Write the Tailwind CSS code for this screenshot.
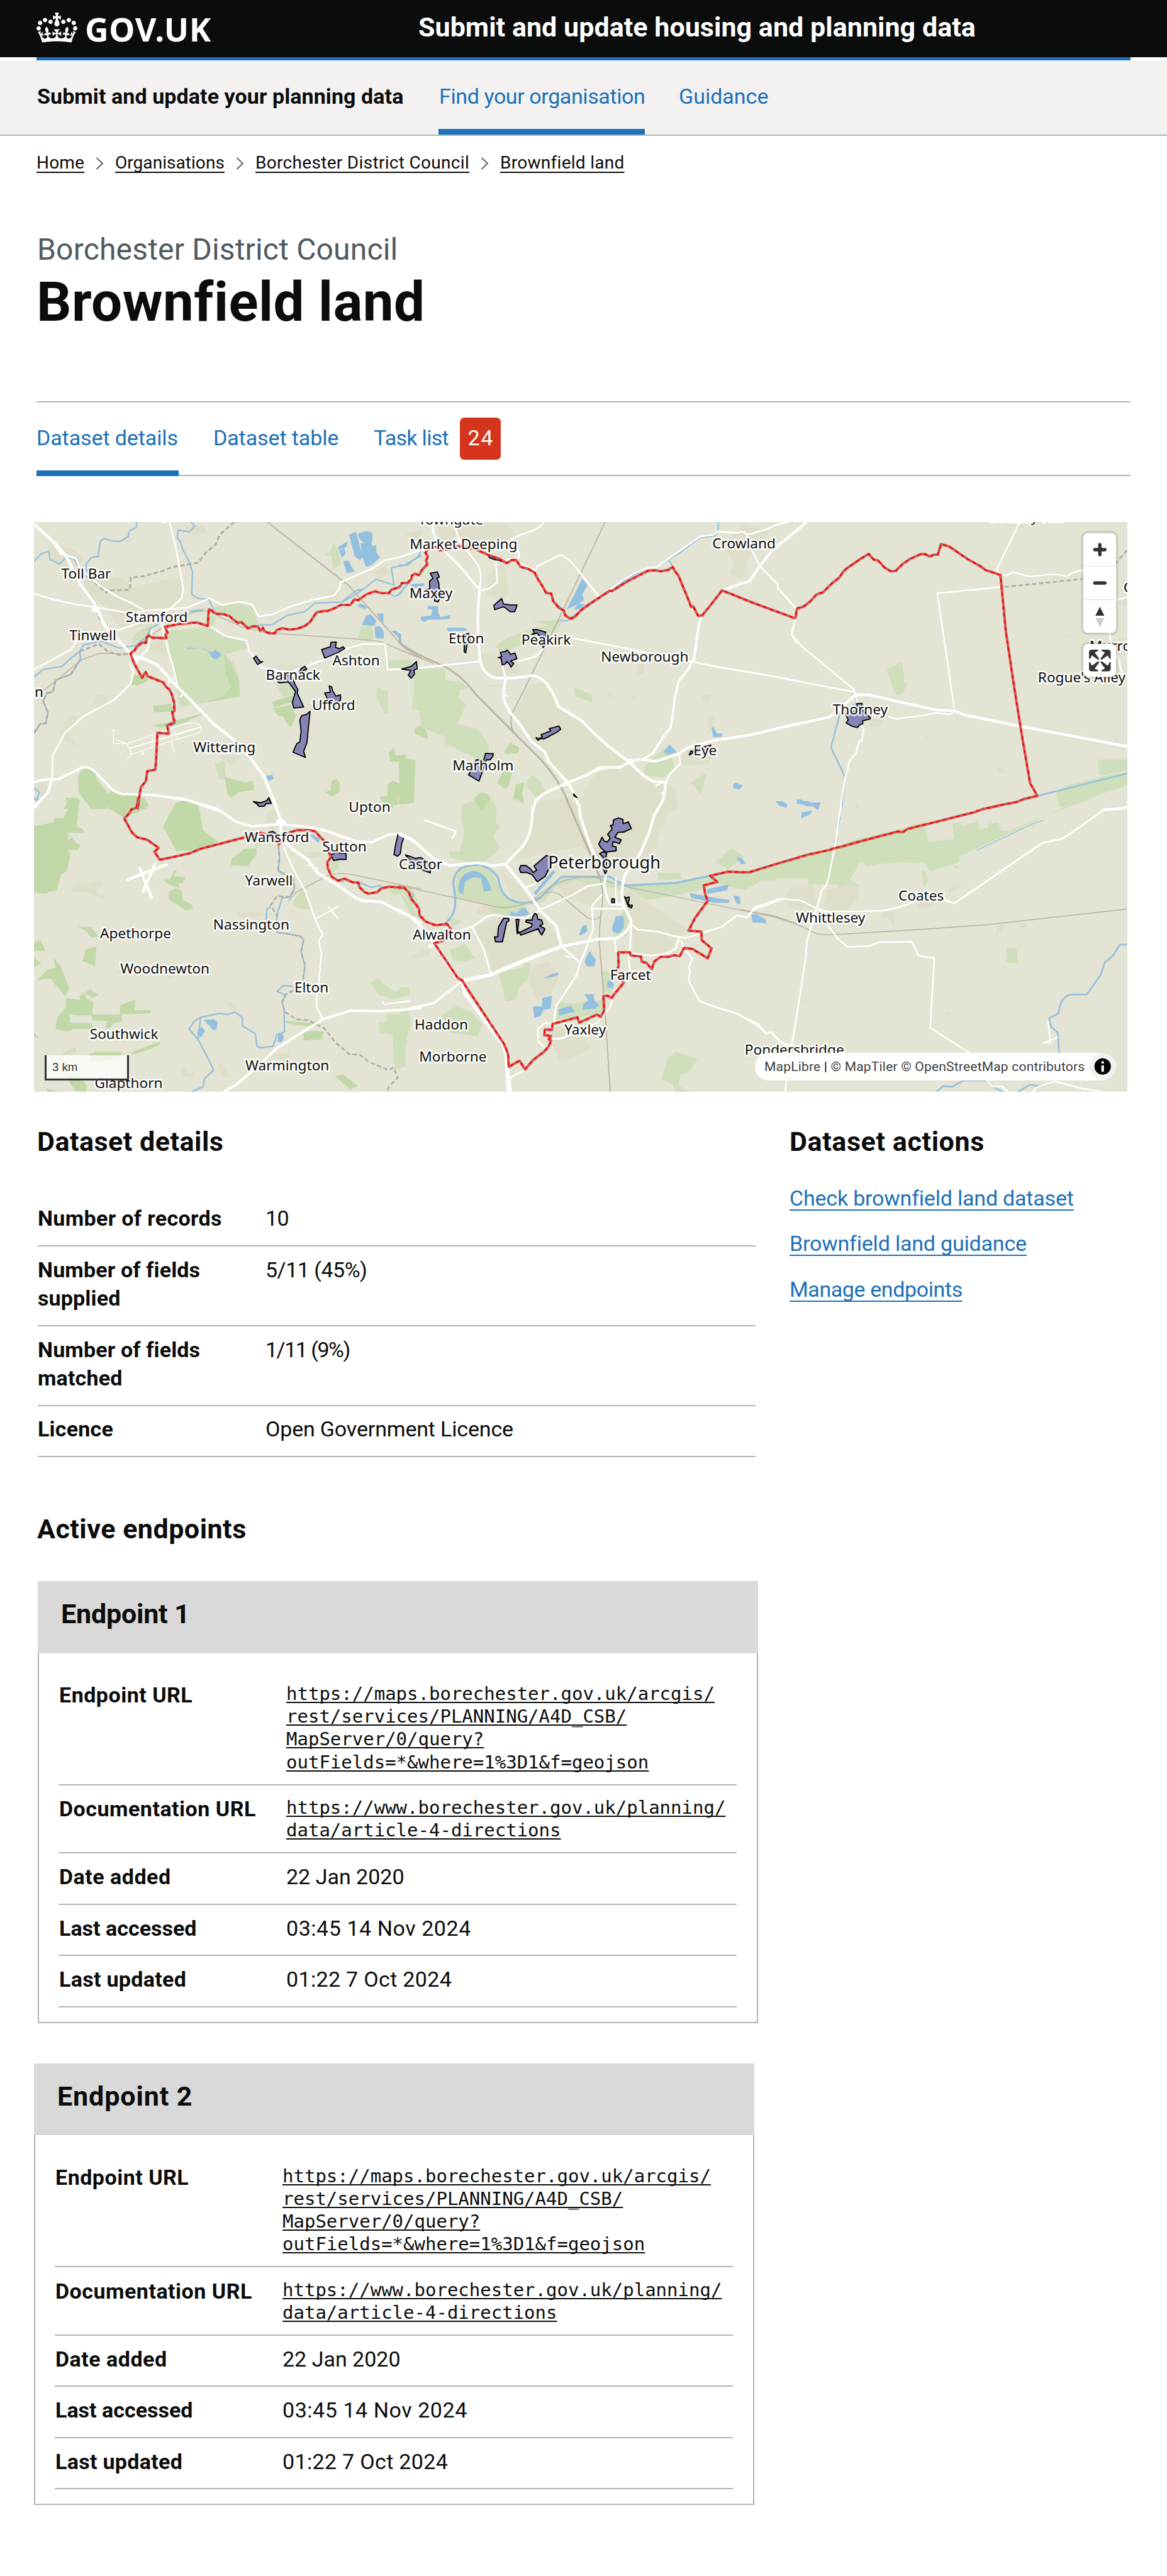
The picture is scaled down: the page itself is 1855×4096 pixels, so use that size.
<!DOCTYPE html>
<html lang="en">
<head>
<meta charset="utf-8">
<title>Brownfield land - Submit and update housing and planning data</title>
<script src="https://cdn.jsdelivr.net/npm/@tailwindcss/browser@4"></script>
</head>
<body class="min-h-[4096px] w-[1855px] overflow-x-hidden bg-white font-['Roboto',sans-serif] text-[34px] text-[#0b0c0c]">

<header class="flex h-[91px] items-start bg-[#0b0c0c] px-[58px] text-white">
  <a class="flex w-[607px] items-start">
    <svg class="mt-5 h-[48px] w-[65px]" viewBox="0 0 132 97" fill="currentColor"><path d="M25 30.2c3.5 1.5 7.7-.2 9.1-3.7 1.5-3.6-.2-7.8-3.9-9.2-3.6-1.4-7.6.3-9.1 3.9-1.4 3.5.3 7.5 3.9 9zM9 39.5c3.6 1.5 7.8-.2 9.2-3.7 1.5-3.6-.2-7.8-3.9-9.1-3.6-1.5-7.6.2-9.1 3.8-1.4 3.5.3 7.5 3.8 9zM4.4 57.2c3.5 1.5 7.7-.2 9.1-3.8 1.5-3.6-.2-7.7-3.9-9.1-3.5-1.5-7.6.3-9.1 3.8-1.4 3.5.3 7.6 3.9 9.1zm38.3-21.4c3.5 1.5 7.7-.2 9.1-3.8 1.5-3.6-.2-7.7-3.9-9.1-3.6-1.5-7.6.3-9.1 3.8-1.3 3.6.4 7.7 3.9 9.1zm64.4-5.6c-3.6 1.5-7.8-.2-9.1-3.7-1.5-3.6.2-7.8 3.8-9.2 3.6-1.4 7.7.3 9.2 3.9 1.3 3.5-.4 7.5-3.9 9zm15.9 9.3c-3.6 1.5-7.7-.2-9.1-3.7-1.5-3.6.2-7.8 3.7-9.1 3.6-1.5 7.7.2 9.2 3.8 1.5 3.5-.3 7.5-3.8 9zm4.7 17.7c-3.6 1.5-7.8-.2-9.2-3.8-1.5-3.6.2-7.7 3.9-9.1 3.6-1.5 7.7.3 9.2 3.8 1.3 3.5-.4 7.6-3.9 9.1zM89.3 35.8c-3.6 1.5-7.8-.2-9.2-3.8-1.4-3.6.2-7.7 3.9-9.1 3.6-1.5 7.7.3 9.2 3.8 1.4 3.6-.3 7.7-3.9 9.1zM69.7 17.7l8.9 4.7V9.3l-8.9 2.8c-.2-.3-.5-.6-.9-.9L72.4 0H59.6l3.5 11.2c-.3.3-.6.5-.9.9l-8.8-2.8v13.1l8.8-4.7c.3.3.6.7.9.9l-5 15.4v.1c-.2.8-.4 1.6-.4 2.4 0 4.1 3.1 7.5 7 8.1h.2c.3 0 .7.1 1 .1.4 0 .7 0 1-.1h.2c4-.6 7.1-4.1 7.1-8.1 0-.8-.1-1.7-.4-2.4V34l-5.1-15.4c.4-.2.7-.6 1-.9zM66 92.8c16.9 0 32.8 1.1 47.1 3.2 4-16.9 8.9-26.7 14-33.5l-9.6-3.4c1 4.9 1.1 7.2 0 10.2-1.5-1.4-3-4.3-4.2-8.7L108.6 76c2.8-2 5-3.2 7.5-3.3-4.4 9.4-10 11.9-13.6 11.2-4.3-.8-6.3-4.6-5.6-7.9 1-4.7 5.7-5.9 8-.5 4.3-8.7-3-11.4-7.6-8.8 7.1-7.2 7.9-13.5 2.1-21.1-8 6.1-8.1 12.3-4.5 20.8-4.7-5.4-12.1-2.5-9.5 6.2 3.4-5.2 7.9-2 7.2 3.1-.6 4.3-6.4 7.8-13.5 7.2-10.3-.9-10.9-8-11.2-13.8 2.5-.5 7.1 1.8 11 7.3L80.2 60c-4.1 4.4-8 5.3-12.3 5.4 1.4-4.4 8-11.6 8-11.6H55.5s6.4 7.2 7.9 11.6c-4.2-.1-8-1-12.3-5.4l1.4 16.4c3.9-5.5 8.5-7.7 10.9-7.3-.3 5.8-.9 12.8-11.1 13.8-7.2.6-12.9-2.9-13.5-7.2-.7-5 3.8-8.3 7.1-3.1 2.7-8.7-4.6-11.6-9.4-6.2 3.7-8.5 3.6-14.7-4.6-20.8-5.8 7.6-5 13.9 2.2 21.1-4.7-2.6-11.9.1-7.7 8.8 2.3-5.5 7.1-4.2 8.1.5.7 3.3-1.3 7.1-5.7 7.9-3.5.7-9-1.8-13.5-11.2 2.5.1 4.7 1.3 7.5 3.3l-4.7-15.4c-1.2 4.4-2.7 7.2-4.3 8.7-1.1-3-.9-5.3 0-10.2l-9.5 3.4c5 6.9 9.9 16.7 14 33.5 14.8-2.1 30.8-3.2 47.7-3.2z"/></svg>
    <span class="ml-[12px] font-['Noto_Sans',sans-serif] text-[52px] leading-[91px] font-bold tracking-[0.7px]">GOV.UK</span>
  </a>
  <span class="text-[43px] leading-[86px] font-bold whitespace-nowrap tracking-[0.04px]">Submit and update housing and planning data</span>
</header>
<div class="mx-[58px] h-[5px] bg-[#1d70b8]"></div>

<nav class="flex h-[120px] border-b-2 border-[#b1b4b6] bg-[#f3f2f1] px-[58px] leading-[114px] whitespace-nowrap">
  <span class="w-[639px] pl-px font-bold tracking-[0.08px]">Submit and update your planning data</span>
  <a class="h-[118px] w-[328px] border-b-[9px] border-[#1d70b8] pl-px tracking-[-0.4px] text-[#1d70b8]">Find your organisation</a>
  <a class="ml-[54px] text-[#1d70b8]">Guidance</a>
</nav>

<ol class="flex h-[58px] items-start px-[58px] pt-7 text-[28px] leading-[30px] whitespace-nowrap underline decoration-[2px] underline-offset-[5px] [text-decoration-skip-ink:none]">
  <li class="w-[76px] tracking-[0.2px]">Home</li>
  <li class="mx-[18px] pt-[6px]"><svg class="h-[20px] w-[13px]" viewBox="0 0 13 20" fill="none" stroke="#505a5f" stroke-width="1.8"><path d="M1.5 1L11 10L1.5 19"/></svg></li>
  <li class="w-[174px] tracking-[0.05px]">Organisations</li>
  <li class="mx-[18px] pt-[6px]"><svg class="h-[20px] w-[13px]" viewBox="0 0 13 20" fill="none" stroke="#505a5f" stroke-width="1.8"><path d="M1.5 1L11 10L1.5 19"/></svg></li>
  <li class="w-[340px] tracking-[0.31px]">Borchester District Council</li>
  <li class="mx-[18px] pt-[6px]"><svg class="h-[20px] w-[13px]" viewBox="0 0 13 20" fill="none" stroke="#505a5f" stroke-width="1.8"><path d="M1.5 1L11 10L1.5 19"/></svg></li>
  <li class="tracking-[0.28px]">Brownfield land</li>
</ol>

<main>
  <div class="px-[58px]">
    <p class="mt-[92.7px] pl-[1px] text-[48px] leading-[60px] tracking-[0.18px] text-[#505a5f]">Borchester District Council</p>
    <h1 class="mt-[3px] text-[87px] leading-[100px] font-bold tracking-[0.5px]">Brownfield land</h1>
    <div class="mt-[108px] flex h-[119px] border-y-2 border-[#b1b4b6] leading-[112px] whitespace-nowrap text-[#1d70b8]">
      <a class="h-[117px] w-[226px] border-b-[9px] border-[#1d70b8] tracking-[-0.1px]">Dataset details</a>
      <a class="ml-[55px] w-[199px] tracking-[-0.1px]">Dataset table</a>
      <a class="ml-[56px] tracking-[-0.7px]">Task list</a>
      <span class="mt-[24px] ml-[18px] h-[67px] w-[65px] rounded-[7px] bg-[#d4351c] pl-[2px] text-center leading-[64px] tracking-[1.8px] text-white">24</span>
    </div>
  </div>

  <div class="relative mt-[73px] ml-[54px] h-[906px] w-[1738px] overflow-hidden">
    <svg class="block h-[906px] w-[1738px] bg-[#e3e4d3] [&_path]:[vector-effect:non-scaling-stroke]" viewBox="60 916 1919 1000" preserveAspectRatio="none" fill="none" stroke-linejoin="round">
      <!-- north west -->
      <g transform="translate(40 900) scale(.44643 .33333)">
        <g fill="#dfdeca">
          <path d="M330 330L400 345L430 395L620 335L630 440L600 490L560 500L640 560L480 600L380 600L330 500L250 420L240 350Z"/>
          <path d="M100 180l30-20 80 40 30 40-30 60-90-40zM200 1065l15 0-5 50-25 10-10 50-25-10 10-45zM290 960l40 0 10 60-40 20-20-40zM140 1140l40 20 30 70-60-40zM640 70l80 0 0 30-40 20-40-20zM400 140l35-10-20 30zM500 690l60-30 20 100-70-20zM770 1280l100 0-50 50zM1010 800l90 0 20 60-100 60-30-80zM1380 310l50-30 10 40-40 30zM1200 420l50-20-10 50-30 10zM1500 110l70-20 0 60zM50 1420l50 10-10 60-40 10z"/>
        </g>
        <g fill="#cfdebb">
          <path d="M565 620L650 612L730 600L790 650L870 670L890 710L795 745L835 800L855 885L845 950L790 985L620 1020L600 900L590 800Z"/>
          <path d="M760 495L840 475L905 495L930 590L890 600L850 580L800 540L740 530ZM720 545h40l-10 60h-25ZM1190 220l20-20 15-40 20 50 5 60-30 25-5-70zM1330 600l40-10 10 50-10 40-50-20zM1435 780l90-10 10 40-60 20-40-10zM1395 920l40 20v115l-15-5-30-90zM755 1320l40-10 0 60 10 30-30 5zM1000 910l60-20 20 60-60 20zM440 640l70-60-10 60-70 50z"/>
        </g>
        <g fill="#c1d8a8">
          <path d="M440 850L490 860L492 885L450 910L428 905ZM515 1015l70-10 10 40-80 5zM505 1120l60-15 60-20 100-35-100 60-80 20zM980 995l80-35 20 25-90 40zM985 1030l70-20 20 60-20 60-20-30-10-30-20 0zM735 990l55-25 30-50-20-60-5-110 35 80 20 60 5 80-120 30z"/>
          <path d="M218 1400Q225 1340 262 1345Q290 1360 290 1400L335 1475L330 1560H270L220 1470ZM335 1480L350 1460L450 1490L490 1560H335ZM160 1560L180 1515L220 1518L222 1560ZM600 1560L630 1510L690 1530V1560ZM795 1390l80 30 30-10 5 50-60 10-30 30-15-20zM1190 1470l20-10 5-50 20-10 12 20 0 50-30 25zM1440 1260l20-25 5 40 80 30-5 140-25 60-40-10-20 60-40-20-10-40 30-5v-60l20-20 30 20 10-120-50 0z"/>
        </g>
        <path fill="#93c0e0" d="M1283 115l28-15 10 50 15 80-10 20-20-20zM1317 110l35-15 23 10v45l-30 10-20-20zM1328 160l45-10 0 25 18-5 0 40 15 25-35 40-20 10-15-50zM1240 180l38-30-5 30-30 15zM1245 200l20-15 5 30-15 20zM1260 255l20-5 25 60-30 8zM648 710l30 0 40 8 20 15 15-5 0-12 30 30-20 25-15-5-20-40-35-15-45 5zM655 515l60-10-10 15-50 3zM1315 490l15-15 25 20-10 12zM1350 540l20-5 20 30-5 30-50-5zM1392 530l27 0 0 50-15-20zM1385 600l20-5 15 30v35h-33zM1448 620l20 0 15 25 5 35-15-30zM560 1115l45-20-5 20-20 10zM957 1385l25-5 5 20-20 12z"/>
        <g stroke="#93c0e0" stroke-width="2.2">
          <path d="M448 48V75L420 95L415 125L385 150L355 148L320 135L305 150L297 230L270 235L250 270L253 340"/>
          <path d="M662 48L678 72L655 100L612 90L608 130L620 150L630 195L655 255L668 310L665 430L690 450L732 455L742 485L752 508"/>
          <path d="M45 255L75 215L103 203L108 245L145 270L170 235L200 240L225 290"/>
          <path d="M45 865L80 825L155 808L195 760L225 730L240 695L310 675L380 712L440 700L490 650L500 610L540 580"/>
          <path d="M932 590L980 590L1040 540L1110 520L1150 475L1255 470L1310 430L1390 350L1460 380L1450 290L1500 275L1568 225M1255 470L1310 410L1340 400M1440 425L1465 440L1490 420L1500 390"/>
          <path d="M225 730L228 770L190 850L130 880L120 940L95 950L80 990L100 1050L90 1110L70 1110L45 1160M45 1450L65 1470L55 1515L45 1500"/>
        </g>
        <g stroke="#acaca6" stroke-width="2.8" stroke-dasharray="7 4">
          <path d="M833 48L775 115L760 165L720 210L690 262L590 285L545 308L470 335L425 340L422 405L335 408L330 420L250 330"/>
          <path d="M220 360L290 480L300 550L350 640L420 740M225 730L300 690L335 730L385 750L420 740M228 770L190 850L130 880L120 940L95 950L80 990L100 1050L90 1110L70 1110L45 1160"/>
        </g>
        <g stroke="#b9afa4" stroke-width="1.8">
          <path d="M962 48L1280 380L1340 470L1500 710L1568 765"/>
          <path stroke-width="1.3" d="M75 945L230 775L300 740L420 742L500 650Q560 590 640 540T770 545L870 605L1000 635L1320 665L1400 675L1568 765"/>
        </g>
        <g stroke="#fff" stroke-width="2.6">
          <path stroke-width="4.4" d="M45 60L120 150L165 215L200 300L225 370L290 490L320 590L430 750L470 765L530 800L590 890L700 1040L750 1110L830 1195L890 1280L950 1390L1000 1560"/>
          <path d="M125 165L150 215L210 240L225 290L300 380L370 440L430 475L480 515L600 505L650 498L735 450L785 485L850 468L900 480L928 545L980 535L1060 490L1140 458L1225 435L1245 400L1250 365L1380 290L1420 250L1490 232L1568 190"/>
          <path d="M578 48L605 200L632 400L625 450L580 505L545 530L550 600L575 740L590 800L610 920M45 425L120 455L200 480L280 495L430 530L480 515M370 620L500 560L550 545M45 825L190 720L220 660M735 595L800 650L880 672L890 725L920 775L940 815L1050 840L1180 775L1260 720L1340 690L1425 690L1435 825L1568 820M420 790L435 830L425 900L360 985L240 1070L165 1160L118 1280L116 1400M510 620L490 720L440 790"/>
          <path stroke-width="3.6" d="M45 1420Q65 1400 140 1403L235 1340Q260 1330 290 1370L360 1465L390 1480L510 1485L630 1505L770 1560M116 1403L100 1470L45 1555"/>
          <path fill="#fff" d="M430 760l40-5-25 35zM275 495l20 0-5 25-15-5z"/><path d="M575 900Q570 875 600 870M635 945l-15 25"/>
          <path stroke-width="1.3" d="M360 1190L410 1215L500 1175L640 1110Q700 1095 705 1140L690 1160L585 1200L430 1270L410 1215M350 1145l15 0M357 1145v70l50 0M585 1200l12 62M412 1303l15-35M465 1270l15 0M473 1250v20M510 1180v50M595 1145l10 40"/>
          <path stroke-width="2.2" d="M420 1240L700 1128"/>
        </g>
        <g fill="#8585b5" stroke="#000" stroke-width="1.8">
          <path d="M1176 720L1210 705L1212 682L1233 680L1230 708L1245 715L1260 705L1266 714L1240 735L1188 765ZM908 765l10-10 8 15 10 15 8-2-20 15zM1095 820l15-12 7 16-30 15zM1003 890L1045 850L1065 880L1070 900L1082 930L1080 950L1105 1022L1067 1028L1060 1000L1073 940L1045 890L1010 895ZM1205 912L1215 915L1220 940L1232 965L1250 958L1250 985L1230 1010L1205 1000L1188 948L1210 945ZM1130 1045L1118 1210L1105 1255L1112 1288L1063 1260L1078 1215L1090 1205L1095 1150L1090 1090L1097 1068L1115 1062ZM908 1520L935 1527L960 1515L968 1500L977 1528L958 1530L950 1543L930 1545L920 1530Z"/>
        </g>
      </g>
      <!-- north -->
      <g transform="translate(700 900) scale(.44643 .33333)">
        <g fill="#dfdeca">
          <path d="M150 60L310 48L400 60L380 100L420 130L400 190L300 170L240 150L170 150ZM355 320l60-60 20 160-20 40-70-30zM350 60l80 0 30 50-40 40-50-20z"/>
          <path d="M450 1060L520 900L560 890Q600 920 625 1010L720 1100L780 1180L900 1310L860 1340L780 1345L665 1420L580 1280L520 1200L460 1100ZM320 740l60 0 40 60-10 60-40 10-40-60zM430 790l50 10-10 50-45-10z"/>
          <path d="M735 1440L780 1370L830 1350L910 1330L1000 1410L1055 1430L1100 1460L1080 1560H710ZM1300 130l60-70 100 40-30 60-50 60-30 130-50-30 20-60-30-60zM940 800l25-10v60l-30 5zM1090 1280l100-60 50 40-20 60-100 10zM1215 1065l30 0-5 70-25 30zM1195 960l40-5-10 35-30 0zM820 945l20 0v25h-20zM920 960h12v20h-12zM350 910l55-10-15 20-40 0z"/>
        </g>
        <g fill="#cfdebb">
          <path d="M60 820L180 820L185 880L240 890L275 920L240 935L235 975L262 1005L250 1060L230 1110L310 1140L355 1225V1280L320 1300L180 1215L185 1180L90 1130L80 1040L52 1035L60 940Z"/>
          <path d="M527 572L650 562L610 640L430 720L425 780L380 700L430 655L540 608L590 590ZM690 920L760 955L758 995L695 965ZM965 1340L1040 1240L1070 1260L1085 1340L1040 1395L965 1380ZM1150 1420l60-50-10 60-15 50zM0 780l40 0 0 40-40-10zM260 1560l60-70 60 30-20 40zM520 1380l30 20 30 70-40 30-40-70z"/>
        </g>
        <path fill="#c1d8a8" d="M0 1275L25 1272L30 1300L65 1300L60 1525L5 1535ZM415 1260l25-50 35 25-5 30-50 5zM395 1400l20-50 30 20-10 60-15 25-30-30zM460 1430l35-10-10 60 5 30-40 0zM60 1140l25-20 25 30 5 40-50-25zM300 1500l25-30 30 15 5 35-40 20-20-10z"/>
        <path fill="#93c0e0" d="M660 510L722 345L743 382L722 430L728 460L690 490ZM690 505l15-30 20 10 0 15-30 10zM115 490h40l0 35 10 25 38-12v20l-40 5-50 0-10 12-15-10v-18l40-8 5-30-20-5zM188 605h78v15l-70 4zM50 375l50-5 0 15-55 15zM0 630l10 10v45l-10 0zM1040 1260l25-40 28 38-30 15zM1230 1130l10 0 10 30 26 5-10 15-30 0zM1315 1430l10-10 27 15-10 20-25-5zM1482 1518l25 0 20 20-5 15-25-15z"/>
        <g stroke="#93c0e0" stroke-width="2.2">
          <path d="M1257 48V85L1245 120L1185 130L1100 215L1015 285L975 292L900 345L840 405L700 530L660 570L633 562M605 460L650 515M1063 250L1080 290M0 275L35 275L80 225L90 190M0 430L45 360M710 480l22 5"/>
        </g>
        <g stroke="#b9afa4">
          <path stroke-width="1.6" d="M812 48L640 530L520 860L450 1045Q430 1110 455 1165"/>
          <path stroke-width="2.6" d="M0 680Q60 740 150 790T300 950L440 1140L560 1300Q640 1420 678 1560"/>
          <path stroke-width="1.4" d="M0 718L140 795M443 1080Q438 1120 455 1160"/>
        </g>
        <g stroke="#fff" stroke-width="2.6">
          <path d="M0 235L75 200L150 190L240 150M240 150L215 48M240 150L310 270Q330 310 318 405M382 250L388 365L355 400L318 410M572 48Q550 90 500 105L440 140L470 200L475 235L425 248M475 265L540 305L545 280L640 220L680 260L790 445"/>
          <path stroke-width="3.6" d="M133 48Q130 130 180 200L240 280L318 405"/>
          <path stroke-width="4" d="M318 410Q305 560 318 740Q320 850 385 870L450 870L530 857Q590 870 628 1020L720 1095L775 1170L830 1235L905 1310L960 1380L1000 1415L1050 1420L1045 1480L1020 1560M420 870L412 970Q420 1030 470 1100L520 1200L575 1260L590 1310L665 1420L700 1500L708 1560M525 1560Q530 1500 600 1460L665 1420L740 1380L790 1340L870 1340L905 1312L950 1295"/>
          <path fill="#fff" stroke="none" d="M895 1300l25-10 0 40-15-5zM650 1410l25 0 0 25-20 5zM620 1010l15 10-5 10zM745 1375l45-38 30 5-50 25z"/>
          <path d="M5 825L140 808L318 782M407 800L420 870M465 780L490 775L540 755L580 700M680 658L900 715L1140 780L1270 815L1430 850L1568 885"/>
          <path stroke-width="3.4" d="M1155 780L1140 820L1100 890L1085 980L1070 1130L1040 1180L1000 1265L955 1300"/>
          <path d="M790 445L880 355L940 310L980 290L1015 285L1100 205L1185 125L1240 115L1250 98L1335 105Q1350 90 1370 115L1450 85L1480 65L1530 48M1370 120L1390 200L1420 280L1490 375L1490 395L1568 510M1560 560L1545 640L1568 685"/>
          <path stroke-width="4" d="M1568 90L1470 195L1415 290L1380 360L1340 375L1275 408L1190 545L1180 590L1160 780"/>
          <path stroke-width="4" d="M955 1298L1010 1308L1100 1270L1130 1240L1230 1200L1380 1170L1568 1110"/>
          <path d="M1103 1270L1107 1320L1070 1370L1050 1420M1050 1475l-20 0M1010 1438l20-15M430 962l-15 5M410 930v15"/>
        </g>
        <g fill="#8585b5" stroke="#000" stroke-width="1.8">
          <path d="M124 318L152 311L160 338L150 345L157 365L160 400L172 420L155 468L142 465L140 430L105 405L122 400L122 360L135 345ZM352 222l15 12 8-4 10 10 8-4 14 20-15-8-10 0-25-12zM374 487L405 451L412 480L440 485L465 485L463 498L456 520L438 520L420 500L410 495L378 510ZM255 640l20-5 8 40-15 20-4 42-6-5 0-30zM524 640L535 632L527 615L545 615L578 628L580 690L568 710L560 660L545 632ZM392 762L405 757L400 735L420 730L427 722L435 735L440 745L457 738L465 768L440 780L453 793L442 812L435 795L425 782L420 795L407 800L403 765ZM12 822L50 808L70 783L73 820L60 828L62 850L50 870L38 855L48 830ZM540 1183L550 1190L565 1180L560 1168L598 1148L592 1135L610 1130L630 1122L637 1140L622 1155L600 1170L580 1185L570 1190L555 1188L548 1198ZM342 1266L360 1268L372 1268L370 1282L360 1300L345 1300L330 1360L316 1412L275 1380L305 1300L335 1300ZM688 1480l25 36-5 2-20-32zM1143 1275l5-20 15 0 20-18 45-14-10 20-55 15z"/>
        </g>
      </g>
      <!-- north east -->
      <g transform="translate(1380 900) scale(.42602 .33333)">
        <path fill="#dfdeca" d="M920 60l50 10 20-15-20 30-40-10zM1100 330l30 0-10 20-20-5zM1370 460l35-20v50l-30 0zM1340 670l66-20v20zM1155 640l15 5 5 10-10 5zM345 1090l50-10 10 10-20 30-35 10zM575 1180l15 0v10h-15zM895 1165h10v25h-10zM1355 1185h12v30h-12zM775 1210h12v10h-12zM865 1335l40 20-20 20zM285 1530h15v25h-15z"/>
        <path fill="#cfdebb" d="M415 822L478 787L487 895L500 900L483 940L470 960L448 952ZM1285 1300H1406V1355L1290 1385ZM1143 1440L1320 1385L1406 1365V1435L1130 1550L1112 1480Z"/>
        <path fill="#93c0e0" d="M45 1510l20 0 20 15 35 0 22 0-8 35-20-15-30 0-20-15-20 0z"/>
        <path stroke="#93c0e0" stroke-width="2.4" d="M280 950L292 1000L220 1065L185 1235L243 1390L228 1560M1036 1490L1406 1372"/>
        <path stroke="#b0b0aa" stroke-width="2.8" stroke-dasharray="7 4" d="M900 390L1223 348M1355 270L1406 195"/>
        <g stroke="#fff" stroke-width="2.4">
          <path d="M962 48L905 200L867 300L883 325L905 330L935 312L985 330L1010 335L1100 323L1160 333L1175 318L1215 300L1225 310M885 390L623 423L693 1030M0 445L45 510M38 560L23 640L70 710L100 740L280 930L285 955M1360 460L1406 443M1333 630L1338 700L1370 770L1385 850"/>
          <path stroke-width="4" d="M0 140L85 48M0 1125L180 1075L245 1005L285 958"/>
          <path stroke-width="4.2" d="M285 958L340 958L450 990L620 1038L695 1043L740 1065L960 1122L1406 1230"/>
          <path d="M0 875L280 943M420 1070L450 1085L570 1065L620 1053L675 1062L693 1045M285 958L295 1010M310 1120L320 1140L312 1200L300 1205L288 1265L262 1305L243 1400L226 1530L226 1560M1300 1560L1406 1552"/>
        </g>
        <path fill="#8585b5" stroke="#000" stroke-width="1.8" d="M292 1004L314 1004L310 1030L330 1060L347 1077L346 1085L316 1095L316 1110L305 1115L293 1130L270 1122L247 1106L256 1090L245 1058L292 1040Z"/>
      </g>
      <!-- south west -->
      <g transform="translate(40 1400) scale(.44643 .33801)">
        <path fill="#dfdeca" d="M190 470L220 440L260 445L300 430L312 460L290 490L325 515L320 530L290 515L250 490L195 490ZM840 600l100-10 10 20-90 20zM790 1055l40 10 20 40-40-20zM780 1360l20 60 12 20-15 20-30-60zM625 1420l15-20 10 30 25-5-10 30-30-10zM990 1330l60-10-10 50-50-20zM960 80l30-30 20 60-30 60-20-20zM1100 290l60-10 30 20-80 20zM360 910l40-20-10 20zM560 930l40-5-20 15z"/>
        <g fill="#c1d8a8">
          <path d="M45 145L120 130L125 105L160 105L200 10H225L212 150L235 160L242 180L180 180L175 270L188 290L175 380L150 400L135 480L100 490L95 500L45 490Z"/>
          <path d="M165 235l30-30 15 30 18 10-10 25-55 0zM170 0h50l-5 35-45-20zM330 0h150l15 40-40 35-35 15-20 15-68-60zM600 30L635 10L692 35L710 170L770 230L700 265L662 275H603L552 148ZM820 320l30-30 20-25 50-2 0 30-35 62-65-5zM553 425l25 0 20-45 10 0-15 25 50 10-15 30-15 0 5 25-40-20-20-15zM575 490l25-20 25 10 5 50 35 25 5 20-30 10-25-25-40-30zM218 670l50 0 25 40 5 10-30 5-15-30zM45 750l25-10 20 55-45 0zM250 785l40-12-5 100-50-25zM45 830l28 30-28 20zM55 950l40-55 35-15-10-50 28 40 15 50 20 70-15 40-40-60-15-30-30 0z"/>
          <path d="M170 1040l55 10v-20l40-35 35 30-25 10-30-20 5 25 30 25-5 25 0 40h-60l-30-5 0 50 10 30-20 10-45-15 5-60 35-50zM382 1078l60-30 0 55 62 0-1 15-60 5-30 0-30 0zM270 1125h120l0 35-30 10-20 30-15-10 10-30-60-5zM150 1170l120 0 10 30-120 0zM430 1320l50-25 60-30 0 15-40 25-70 30zM1105 1220l30-10 50 5-10 40-70 5zM1035 1160l100 10 30-20-30 40-100-20zM95 1510l50 17h-50zM260 1330l30-10 100 0-10 40-110 10zM160 1430l60 10 30 50 0 35h-40zM45 1220l20 25-20 0z"/>
          <path d="M1405 0h70v40l-30-10-10-30M1228 1445l30-10 60 60-30 20z"/>
        </g>
        <path fill="#cfdebb" d="M1370 960l30-25 30 45 40 30 15-25 32 0 5 40-60 20-60-20zM1210 330l30-30 5 60-30 30zM1060 550l35-70 25 20 15 80-50-5zM1430 470l100 0 30 90-40-10-20-60-40 20zM160 1320l50-25 0 30-50 10zM1400 1165l30 5 0-45h60l0 40 25 5 5 25-15 70 0 130-40 15-10-110 0-70-50-10zM910 230l30 10-20 20z"/>
        <path fill="#93c0e0" d="M712 1155l40-5 15 15-5 40-15 0-15-25zM690 1205l15-15 12 20-15 35-15-15zM1005 1225l15-5 8 25-10 25-15-5zM1130 190l15 0 10 15 15 0-5 30-20-20z"/>
        <g stroke="#93c0e0" stroke-width="2.3">
          <path d="M665 1527L710 1500L715 1460L750 1415L745 1395L690 1255L700 1145M690 1255L655 1200L675 1160L700 1140L775 1120L810 1125L835 1113L863 1140L865 1185L915 1225L922 1290L935 1298L985 1290L1000 1230L1030 1215L1028 1100L1020 1060L1035 1025L1000 1005L1025 975L1065 980M1005 240L1010 310L1005 380L1065 420L1068 475L1050 515L1020 520L1000 610L1000 700L1035 705L1090 718L1105 735L1095 800L1110 870L1103 950M975 565L960 580L957 640M1325 440L1370 465L1410 455M1240 435l25 0M1530 495l8 10-5 15M45 0l10 15 8-15"/>
        </g>
        <g stroke="#acaca6" stroke-width="2.4" stroke-dasharray="7 4">
          <path d="M1006 245L1010 310L1005 380L1065 420L1068 475L1050 515L1000 510L975 560L1000 610L1000 700L1035 705L1090 718L1105 735L1095 800L1110 870L1103 950M1065 1000L1035 1020L1020 1060L1030 1110L1075 1150L1120 1155L1185 1195L1230 1270L1285 1333L1325 1333L1360 1370L1440 1415L1458 1400L1475 1455L1440 1500L1433 1527"/>
        </g>
        <path stroke="#b9afa4" stroke-width="1.3" d="M1045 535L1075 490L1200 405Q1240 385 1300 400L1568 475"/>
        <g stroke="#fff" stroke-width="2.4">
          <path stroke-width="3.8" d="M580 0L640 10L780 70L840 125L900 148L1010 138L1100 148L1180 165L1260 205L1310 225L1370 232L1440 190L1490 188L1530 215L1568 260M45 42L80 0"/>
          <path stroke-width="4.4" d="M985 0L1010 100L1020 220L1060 265L1120 320L1160 390L1240 455L1310 520L1340 535L1410 540L1460 575L1540 625L1568 660"/>
          <path stroke-width="2.4" d="M1120 155L1230 185L1310 225"/>
          <path fill="#fff" d="M1000 120l15-10 20 20-10 10-25 0z"/>
          <path d="M1025 250L1060 360L1110 480L1150 630L1180 710L1165 745L1175 805L1163 990L1155 1040L1157 1090L1180 1148"/>
          <path stroke-width="3.8" d="M790 1527L840 1490L920 1400L1000 1300L1180 1150L1290 1105L1400 1108L1490 1102L1568 1090"/>
          <path stroke-width="4.4" d="M408 428L570 345M460 362L508 523M522 338L472 492"/>
          <path stroke-width="2" d="M1150 630L1243 563M1202 565L1241 628M1415 1055L1422 1073L1525 1055M1118 350l15 0M1160 360l-10 20"/>
        </g>
        <g fill="#8585b5" stroke="#000" stroke-width="1.8">
          <path d="M908 20L935 27L960 15L968 2L977 30L958 30L950 43L930 45L920 30ZM968 180l15-5 25 20-5 40-35-40zM1212 295l20-10 40 5v30l-25 0-25 5zM1476 190L1501 197L1490 240L1485 290L1475 303L1460 295L1467 240ZM1505 297l20 8 20 10 20-5 40 30-2 50-40-20-30-30z"/>
        </g>
      </g>
      <!-- south -->
      <g transform="translate(700 1400) scale(.44643 .33801)">
        <g fill="#dfdeca">
          <path d="M525 20L690 0H1090L1100 50L1050 90L1010 250L960 330L880 350L780 340L720 250L600 280L560 290L430 330L480 260L520 180ZM400 370L480 460L520 540L430 600L370 610L300 600L330 560L450 530ZM290 670L400 620L560 600L640 760L500 850L370 910L350 800ZM880 460L960 530L1140 680L1110 720L1000 690L920 670L890 580ZM620 440L800 430V500L760 560L660 520ZM920 680L1090 720L1070 790L1000 820L920 800ZM600 1190L660 1180L720 1250L760 1290L690 1350L640 1380L610 1300ZM530 870l60-20 40 80-30 90-60 20-30-90zM50 820l80-50-10 50-70 20z"/>
        </g>
        <g fill="#cfdebb">
          <path d="M250 40L330 0L385 40L380 130L400 150L370 200L400 260L340 330L300 340L200 310V280L240 280L260 180L245 110Z"/>
          <path d="M230 380Q310 320 370 390L400 480Q440 540 520 540L570 500L640 420L800 410L870 450L880 480L700 430L620 460L570 540L500 560L510 600L440 620L370 600L350 570L400 560L220 520Z"/>
          <path d="M890 460L1080 445L1220 400L1380 395L1568 325V415L1440 420L1360 480L1240 445L1200 470L1080 510L970 530ZM1250 330l60-70 48 45-60 65-50-30zM1020 390h90v30l-90 10zM845 640l50-60 20 60-20 80-50 0zM395 910L490 880L490 860L520 860L510 940L470 990L465 1045L420 1058ZM0 480L60 570L80 630L110 650L50 610ZM200 790l60-30 40 70-40 20-45 0zM625 1060l50 10 60-10 80-10-5 60-100 30-90 10zM800 900l45 10-10 110-30-20zM170 1130l60-50 60 40 40 60-20 60-110-20zM0 1100l40 5 10 60-20 100-10 60-20 0zM0 1000l40-20v40l-40 10zM1040 1430l20-80 30-30 85 35-35 70-30 10-10 60 50 40-60-5-10-40-45-30zM190 620l60 20-40 30z"/>
        </g>
        <path fill="#c1d8a8" d="M0 0h60l-20 30-40 5zM295 0h70l-20 30-20 35-25-45zM460 0h30v30z"/>
        <path fill="#93c0e0" d="M235 480Q235 390 295 380Q350 390 365 480L335 488L325 420Q290 400 260 440L255 500L240 495ZM440 590l25 10 20-30 15 5 15 30-30 10-45 0zM708 715l15-50 15-5 5 30-20 20zM840 670l15-55 30 0 0 60-20 30-25-10zM730 850l20-55 25 45-5 35-30 0zM570 938l35-25 25-5-5 15-50 15zM565 1040l38-12-5 65-30 10-10 30-25 10-5-60 35 0zM627 1100l50-20 15 30-60 20zM725 1075l20-25-15-30 38 0 0 30 20 25-15 20-50 5zM820 960l12-20 15 30-5 20-20-5zM1145 495l60 15 65 15 30 5v15l-60 0-90-25zM1212 475l85-25-5 30-80 20zM1315 508l25 5 5 35-15 5zM1330 305l20 10 15 25-15 5-20-25zM1388 610l15-5 20 20 20 5 0 20-50-5zM1482 18l25 0 20 15v15l-30-10z"/>
        <g stroke="#93c0e0">
          <path stroke-width="3.2" d="M185 650Q220 610 222 560T215 450Q215 400 240 370Q270 345 320 348Q390 380 395 440Q410 540 490 547Q545 545 570 500L640 410L760 410L830 410L880 450L900 455L1090 442L1225 405"/>
          <path stroke-width="5" d="M535 500L612 380"/><path stroke-width="2" d="M52 495l7 8-5 12"/>
        </g>
        <g stroke="#b9afa4">
          <path stroke-width="2.8" d="M658 0L740 250L790 410"/><path stroke-width="1.7" d="M790 410Q808 480 800 560Q785 680 792 800L812 1120L832 1527"/>
          <path stroke-width="1.4" d="M0 455L380 565Q440 580 520 540L580 495Q600 480 630 500L740 620Q780 650 798 600M520 540Q600 440 680 420T790 420L870 455L1480 620L1568 658"/>
        </g>
        <g stroke="#fff" stroke-width="2.7">
          <path stroke-width="4.2" d="M548 0Q530 30 525 90Q525 180 490 250L420 345L370 352L310 338L200 352L140 320L60 225L0 188M420 345L495 465L560 590L620 665L640 770"/>
          <path stroke-width="3" d="M640 770L690 830L715 860"/>
          <path stroke-width="4.2" d="M690 0L710 40L715 100L740 200L770 300L815 395M1045 0L1005 90L985 180L950 290L890 400Q870 480 885 560L915 640Q900 710 850 730L780 735L640 772L500 845L360 920L250 950"/>
          <path stroke-width="3.4" d="M815 395L808 460L820 520L830 550L880 555M250 950L140 1065L0 1108"/>
          <path stroke-width="5.5" d="M640 772L500 840L360 920L250 950L262 1020L410 1280L425 1340L430 1440L440 1527"/>
          <path stroke-width="4.4" d="M0 585L50 620L110 700L232 940M422 1340L430 1527"/>
          <path stroke-width="3" d="M430 1460L500 1410"/>
          <path d="M495 470L545 440M115 770l30-5M120 780l25-15M240 690L290 670L350 615Q380 600 420 618L500 625L560 580L690 500L740 460L805 445M290 670L335 790L363 920M800 500L760 560L765 680L735 790L713 860L700 920L620 1080L608 1200M755 577L890 575L915 650L910 780L905 850L910 900M850 735L855 800M920 660L940 685L1020 695L1080 718L1130 728L1270 670L1330 610L1370 622L1400 570L1500 525L1568 530M1105 720L1090 780Q1060 820 980 818L910 808M1110 740L1125 790L1155 835L1140 880L1145 900L1140 950L1180 1050Q1200 1070 1330 1120L1410 1180L1445 1225L1465 1217L1510 1275L1568 1290M840 1045L835 1080L780 1170L640 1250L600 1250M608 1175L575 1170L548 1200V1265L575 1300M100 115L225 175L210 215M0 1063L45 1055"/>
          <path stroke-width="2.2" d="M1525 1460L1520 1527M1568 1100L1545 1280M675 830l-20-10M855 410Q850 520 860 550"/>
        </g>
        <g fill="#8585b5" stroke="#000" stroke-width="1.9">
          <path d="M845 115L865 105L882 112V135L903 125L915 160L885 178L862 180L850 205L875 218L868 238L843 228L840 250L855 255L855 275L815 282L795 260L787 240L800 205L808 225L820 230L832 210L822 190L840 160L832 145L843 140ZM790 290L803 280L818 285L815 310L818 380L812 395L802 360L805 310ZM475 370L480 352L500 352L515 365L530 388L543 375L532 355L580 300L602 305V340L575 410L545 436L525 400L505 388L480 388ZM838 525h10v20h-10zM888 513l5 8 13-6 0 18-5 15 8 10 10 0-4 14-12-8-10-35zM413 625L433 627V640L425 645L408 748H381L377 722H390V705L393 670ZM462 632H473L468 690L475 700L522 670L525 655L500 645L502 635L525 635L527 620L535 600L543 605L547 630L562 635L567 655L555 665L575 680L572 690L563 712L553 695L550 680L480 713L475 700L466 705Z"/>
        </g>
      </g>
      <!-- south east -->
      <g transform="translate(1300 1400) scale(.47704 .33801)">
        <path fill="#cfdebb" d="M0 378L30 380L345 255L430 215L580 165L680 125L690 230L787 215L780 130H810L812 145L870 127L878 165L910 155L912 135L948 127L960 172L990 170L1080 115L1300 0H1165L1175 50L1240 15L980 190L805 305V330L785 345L740 360L700 385L680 340L580 335L500 345L465 355L450 335L430 340V360L402 425L440 460L380 475L360 470V450L250 450L246 417L130 418L130 430L0 425ZM665 378l15 0 10 55-15 30zM785 350l15 5-5 20zM980 780l35 0 5 80-43-5z"/>
        <path fill="#dfdeca" d="M185 460L270 450L285 580L200 580L160 530ZM320 480L400 450L440 470L430 520L390 590L300 590ZM525 590l45 0-5 75-20-40-20 0zM765 480l30-40 15 15-40 40zM650 550l50-20 20 25-60 20zM945 655h25l-5 40-25 25zM1000 650l55 5-5 30-20-20zM220 1050h20l-15 15zM365 1155l20-20-5 15zM755 1110l20 10-10 10zM320 670l40 20 0 40-20-20z"/>
        <path fill="#93c0e0" d="M128 18h20l22 15v15l-25-5zM208 8l25 10 20 0 10 15 30-10-8 42-18-20-40-10-20-5zM225 75l40-8-10 20-32 20zM0 310l20 30-20 5zM40 605h20l35 30v18l-25-5-25 0z"/>
        <g stroke="#93c0e0" stroke-width="2.6">
          <path d="M1423 762L1395 763L1370 820L1340 855L1325 920L1275 1020L1212 1022Q1175 1040 1170 1120L1135 1145L1143 1190L1168 1220L1172 1330M722 1527L745 1498L780 1500L820 1468H900L930 1500L965 1527M1020 1527L1065 1490L1105 1500L1155 1470"/>
          <path stroke-width="1.5" d="M870 273L1075 135L1113 118M368 100L345 235"/>
        </g>
        <path stroke="#b9afa4" stroke-width="1.5" d="M0 580L120 612Q190 640 270 700Q290 715 350 710L700 680L900 660L1423 578"/>
        <g stroke="#fff" stroke-width="2.5">
          <path d="M372 0L368 50L345 270L325 410L315 455L295 490V510L280 575L245 740L240 830L190 1285M170 1460L165 1527M0 610L20 622L50 580L155 525L225 535L280 575L320 590L440 590L530 585L580 570L640 540M320 660L360 735L395 775L475 770L510 750L630 747L655 820L713 833L698 1195L843 1325M0 1130L65 1175L95 1225L112 1217L150 1275L190 1290M905 1470L930 1500L965 1500L985 1527M1075 1527L1090 1505L1155 1472L1260 1510L1335 1527"/>
          <path stroke-width="2.9" d="M750 530L787 548L1110 235L1185 212L1250 150L1335 65L1400 58L1423 45"/>
          <path d="M1132 1160L1140 1278M1113 1276L1168 1242"/>
        </g>
      </g>
      <!-- local authority boundary -->
      <defs>
        <g id="boundary">
          <path transform="translate(40 900) scale(.44643 .33333)" d="M453 1560L458 1500 465 1445 485 1412 490 1360 522 1352 527 1250 530 1158 575 1162 568 1120 597 1104 588 1048 596 1045 596 1000 585 950 577 930 563 915 553 893 520 875 492 860 484 838 470 868 452 825 438 790 424 740 442 722 447 708 462 690 472 682 485 685 488 655 497 645 508 657 565 660 562 640 570 632 560 600 620 584 685 577 728 595 732 508 745 515 752 525 765 532 790 533 815 545 828 562 848 580 860 575 886 608 905 597 925 598 935 622 945 605 950 622 965 632 990 635 1000 617 1020 607 1050 615 1080 610 1110 595 1130 575 1155 525 1180 517 1200 516 1230 500 1250 485 1288 485 1305 455 1320 460 1350 430 1385 413 1410 422 1440 423 1450 405 1483 390"/>
          <path transform="translate(700 900) scale(.44643 .33333)" d="M5 392L12 370 35 368 50 350 52 330 65 320 80 328 92 300 113 270 108 250 115 230 105 210 120 185 150 180 160 198 200 190 235 175 300 190 350 220 400 245 425 265 445 248 462 248 480 285 510 295 535 315 548 350 565 385 580 422 600 425 608 465 630 500 650 515 655 540 675 557 693 548 715 515 750 480 830 410 838 412 900 360 980 305 1010 302 1030 308 1060 300 1078 285 1085 305 1100 330 1120 395 1140 460 1150 495 1158 492 1177 541 1193 541 1230 480 1272 408 1400 477 1560 556"/>
          <path transform="translate(1380 900) scale(.42602 .33333)" d="M38 556L45 503 70 495 98 468 125 430 152 418 190 370 220 340 235 310 250 292 300 248 340 216 360 245 380 252 405 287 432 308 452 305 480 270 510 243 555 217 575 218 592 230 610 220 625 220 638 165 672 177 750 245 800 280 820 300 883 327 890 420 905 620 940 920 970 1160 1005 1422 1035 1490 980 1507 948 1523 905 1533 810 1560"/>
          <path transform="translate(1300 1400) scale(.47704 .33801)" d="M891 59L860 75 720 125 615 162 598 178 580 175 430 230 370 255 345 262 330 270 250 295 140 340 30 388"/>
          <path transform="translate(700 1400) scale(.44643 .33801)" d="M1376 388L1295 384 1225 405 1253 437 1200 455 1205 500 1215 535 1165 625 1140 690 1190 695 1192 740 1230 782 1215 833 1155 785 1122 780 1105 823 1085 817 1060 826 1030 826 1005 850 995 890 975 858 955 850 953 825 912 818 910 803 863 803 865 875 855 900 885 960 845 1025 838 1040 822 1028 805 1030 808 1105 795 1138 780 1125 710 1168 703 1140 605 1175 603 1205 575 1203 573 1233 600 1237 590 1255 600 1260 590 1290 572 1318 530 1360 497 1410 475 1365 433 1397 430 1330 415 1280 330 1110 262 975 250 948 232 935 140 755 180 740 205 680 190 655 145 662 105 642 82 610 80 575 50 525 40 490 22 468 0 467"/>
          <path transform="translate(40 1400) scale(.44643 .33801)" d="M1500 467L1440 462 1410 470 1395 490 1360 498 1345 490 1325 465 1320 440 1300 440 1265 420 1240 430 1215 410 1200 365 1198 335 1212 310 1190 230 1150 175 1130 168 1080 168 1045 182 1008 240 990 200 935 182 860 210 700 265 660 287 600 305 540 322 518 280 535 260 490 218 450 205 430 180 400 108 420 80 428 60 448 52 455 0"/>
        </g>
      </defs>
      <use href="#boundary" stroke="#ff0a0a" stroke-width="3.6"/>
      <use href="#boundary" stroke="#b86464" stroke-width="3.6" stroke-dasharray="5.5 5.5"/>
      <!-- place names -->
      <g class="font-['Noto_Sans',sans-serif] text-[25px]" fill="#111" stroke="#fff" stroke-opacity=".78" stroke-width="6" paint-order="stroke">
        <text x="108" y="1015.7">Toll Bar</text><text x="221" y="1091">Stamford</text><text x="122" y="1123">Tinwell</text>
        <text x="467" y="1193.3">Barnack</text><text x="584" y="1168">Ashton</text><text x="548" y="1245.7">Ufford</text>
        <text x="339.5" y="1319.7">Wittering</text><text x="46" y="1223.3">on</text><text x="286" y="910.5">y</text>
        <text x="734.5" y="920.5">Towngate</text><text x="719.5" y="964">Market Deeping</text><text x="719" y="1049.7">Maxey</text>
        <text x="787.5" y="1129.3">Etton</text><text x="915.5" y="1130.7">Peakirk</text><text x="1055" y="1161">Newborough</text>
        <text x="1250.5" y="962.3">Crowland</text><text x="1217.5" y="1326">Eye</text><text x="794.5" y="1351.7">Marholm</text>
        <text x="1462" y="1253.3">Thorney</text><text x="1822" y="1197.7">Rogue's Alley</text><text x="1912.5" y="1142.7">Murrow</text>
        <text x="1972" y="1039.3">Guyhirn</text><text x="1733" y="915.5">Gedney Hill</text>
        <text x="612.5" y="1424.7">Upton</text><text x="430" y="1477.4">Wansford</text><text x="566" y="1494.3">Sutton</text>
        <text x="700.5" y="1525">Castor</text><text x="430.5" y="1554.5">Yarwell</text><text x="374.5" y="1631.2">Nassington</text>
        <text x="176" y="1647">Apethorpe</text><text x="211.5" y="1709">Woodnewton</text><text x="517" y="1741.4">Elton</text>
        <text x="158" y="1823">Southwick</text><text x="431" y="1878.7">Warmington</text><text x="166.5" y="1909">Glapthorn</text>
        <text x="725" y="1649">Alwalton</text><text x="728" y="1806.7">Haddon</text><text x="736" y="1863">Morborne</text>
        <text class="text-[30px]" x="962.5" y="1524.7">Peterborough</text><text x="1071" y="1719.5">Farcet</text><text x="991" y="1815.5">Yaxley</text>
        <text x="1307.5" y="1851.3">Pondersbridge</text><text x="1397" y="1619">Whittlesey</text><text x="1577" y="1580.2">Coates</text>
      </g>
    </svg>

    <div class="absolute top-[18px] right-[18px] flex w-[52.5px] flex-col divide-y-[1.8px] divide-[#ddd] rounded-[7px] bg-white shadow-[0_0_0_3.6px_rgba(0,0,0,0.1)]">
      <button class="h-[53px]"><svg class="h-full w-full" viewBox="0 0 29 29" fill="#333"><path d="M14.5 8.5c-.75 0-1.5.75-1.5 1.5v3h-3c-.75 0-1.5.75-1.5 1.5S9.25 16 10 16h3v3c0 .75.75 1.5 1.5 1.5S16 19.75 16 19v-3h3c.75 0 1.5-.75 1.5-1.5S19.75 13 19 13h-3v-3c0-.75-.75-1.5-1.5-1.5z"/></svg></button>
      <button class="h-[53px]"><svg class="h-full w-full" viewBox="0 0 29 29" fill="#333"><path d="M10 13c-.75 0-1.5.75-1.5 1.5S9.25 16 10 16h9c.75 0 1.5-.75 1.5-1.5S19.75 13 19 13h-9z"/></svg></button>
      <button class="h-[52px]"><svg class="h-full w-full" viewBox="0 0 29 29"><path fill="#333" d="M10.5 14l4-8 4 8h-8z"/><path fill="#ccc" d="M10.5 16l4 8 4-8h-8z"/></svg></button>
    </div>
    <button class="absolute top-[194px] right-[18px] h-[52.5px] w-[52.5px] rounded-[7px] bg-white shadow-[0_0_0_3.6px_rgba(0,0,0,0.1)]"><svg class="h-full w-full" viewBox="0 0 29 29" fill="#333"><path d="M24 16v5.5c0 1.75-.75 2.5-2.5 2.5H16v-1l3-1.5-4-5.5 1-1 5.5 4 1.5-3h1zM6 16l1.5 3 5.5-4 1 1-4 5.5 3 1.5v1H7.5C5.75 24 5 23.25 5 21.5V16h1zm7-11v1l-3 1.5 4 5.5-1 1-5.5-4L6 13H5V7.5C5 5.75 5.75 5 7.5 5H13zm11 2.5c0-1.75-.75-2.5-2.5-2.5H16v1l3 1.5-4 5.5 1 1 5.5-4 1.5 3h1V7.5z"/></svg></button>
    <div class="absolute bottom-[18px] left-[17px] h-[40px] w-[134px] border-[3.6px] border-t-0 border-[#333] bg-white/75 pl-[9px] font-['Liberation_Sans',sans-serif] text-[18.5px] leading-[37px] text-[#333]">3 km</div>
    <div class="absolute right-[18px] bottom-[18px] flex h-[43.5px] w-[574px] rounded-[22px] bg-white pl-[15px] text-[21px] leading-[44px] tracking-[0.2px] whitespace-nowrap text-[#404040]">
      <span>MapLibre <span class="text-black">|</span> © MapTiler © OpenStreetMap contributors</span>
      <span class="absolute right-0 h-[43.5px] w-[43.5px] rounded-full bg-black/5"><svg class="h-full w-full" viewBox="0 0 20 20" fill="#000" fill-rule="evenodd"><path d="M4 10a6 6 0 1 0 12 0 6 6 0 1 0-12 0m5-3a1 1 0 1 0 2 0 1 1 0 1 0-2 0m0 3a1 1 0 1 1 2 0v3a1 1 0 1 1-2 0"/></svg></span>
    </div>
  </div>

  <div class="mt-[54px] flex">
    <section class="ml-[60px] w-[1141px]">
      <h2 class="-ml-px text-[43px] leading-[50px] font-bold tracking-[0.5px]">Dataset details</h2>
      <dl class="mt-[61px] leading-[45.3px]">
        <div class="flex h-[81.5px] border-b-2 border-[#b1b4b6] pt-[14.7px]"><dt class="w-[362px] font-bold tracking-[0.35px]">Number of records</dt><dd class="tracking-[-0.5px]">10</dd></div>
        <div class="flex h-[126.8px] border-b-2 border-[#b1b4b6] pt-[14.7px]"><dt class="w-[362px] font-bold tracking-[0.15px]">Number of fields<br>supplied</dt><dd class="tracking-[-0.5px]">5/11 (45%)</dd></div>
        <div class="flex h-[126.8px] border-b-2 border-[#b1b4b6] pt-[14.7px]"><dt class="w-[362px] font-bold tracking-[0.15px]">Number of fields<br>matched</dt><dd class="tracking-[-1.5px]">1/11 (9%)</dd></div>
        <div class="flex h-[81.5px] border-b-2 border-[#b1b4b6] pt-[14.7px]"><dt class="w-[362px] font-bold tracking-[0.2px]">Licence</dt><dd class="tracking-[-0.17px]">Open Government Licence</dd></div>
      </dl>
      <h2 class="mt-[88.5px] -ml-px text-[43px] leading-[50px] font-bold tracking-[0.5px]">Active endpoints</h2>

      <article class="mt-[58.5px] h-[702.7px] w-[1145px] border-2 border-t-0 border-[#b1b4b6]">
        <h3 class="-mx-0.5 h-[114.3px] bg-[#d9d9d9] pl-[37px] text-[43px] leading-[104.8px] font-bold tracking-[-0.2px]">Endpoint 1</h3>
        <dl class="mt-[29px] mr-[32px] ml-[31px] leading-[45.3px]">
          <div class="flex h-[181px] border-b-2 border-[#b1b4b6] pt-[15.5px]"><dt class="w-[362px] pl-px font-bold tracking-[0.5px]">Endpoint URL</dt><dd class="pt-[2px] font-['DejaVu_Sans_Mono',monospace] text-[29px] leading-[36.2px] whitespace-nowrap underline decoration-[1.5px] underline-offset-[3px] [text-decoration-skip-ink:none]">https://maps.borechester.gov.uk/arcgis/<br>rest/services/PLANNING/A4D_CSB/<br>MapServer/0/query?<br>outFields=*&amp;where=1%3D1&amp;f=geojson</dd></div>
          <div class="flex h-[108.6px] border-b-2 border-[#b1b4b6] pt-[15.5px]"><dt class="w-[362px] pl-px font-bold tracking-[0.5px]">Documentation URL</dt><dd class="pt-[2px] font-['DejaVu_Sans_Mono',monospace] text-[29px] leading-[36.2px] whitespace-nowrap underline decoration-[1.5px] underline-offset-[3px] [text-decoration-skip-ink:none]">https://www.borechester.gov.uk/planning/<br>data/article-4-directions</dd></div>
          <div class="flex h-[81.5px] border-b-2 border-[#b1b4b6] pt-[15.3px]"><dt class="w-[362px] pl-px font-bold tracking-[0.5px]">Date added</dt><dd>22 Jan 2020</dd></div>
          <div class="flex h-[81.5px] border-b-2 border-[#b1b4b6] pt-[15.3px]"><dt class="w-[362px] pl-px font-bold">Last accessed</dt><dd class="tracking-[0.55px]">03:45 14 Nov 2024</dd></div>
          <div class="flex h-[81.5px] border-b-2 border-[#b1b4b6] pt-[15.3px]"><dt class="w-[362px] pl-px font-bold tracking-[0.3px]">Last updated</dt><dd class="tracking-[0.33px]">01:22 7 Oct 2024</dd></div>
        </dl>
      </article>

      <article class="mt-[63.8px] -ml-[6px] h-[702.7px] w-[1145px] border-2 border-t-0 border-[#b1b4b6]">
        <h3 class="-mx-0.5 h-[114.3px] bg-[#d9d9d9] pl-[37px] text-[43px] leading-[104.8px] font-bold tracking-[0.9px]">Endpoint 2</h3>
        <dl class="mt-[29px] mr-[32px] ml-[31px] leading-[45.3px]">
          <div class="flex h-[181px] border-b-2 border-[#b1b4b6] pt-[15.5px]"><dt class="w-[362px] pl-px font-bold tracking-[0.5px]">Endpoint URL</dt><dd class="pt-[2px] font-['DejaVu_Sans_Mono',monospace] text-[29px] leading-[36.2px] whitespace-nowrap underline decoration-[1.5px] underline-offset-[3px] [text-decoration-skip-ink:none]">https://maps.borechester.gov.uk/arcgis/<br>rest/services/PLANNING/A4D_CSB/<br>MapServer/0/query?<br>outFields=*&amp;where=1%3D1&amp;f=geojson</dd></div>
          <div class="flex h-[108.6px] border-b-2 border-[#b1b4b6] pt-[15.5px]"><dt class="w-[362px] pl-px font-bold tracking-[0.5px]">Documentation URL</dt><dd class="pt-[2px] font-['DejaVu_Sans_Mono',monospace] text-[29px] leading-[36.2px] whitespace-nowrap underline decoration-[1.5px] underline-offset-[3px] [text-decoration-skip-ink:none]">https://www.borechester.gov.uk/planning/<br>data/article-4-directions</dd></div>
          <div class="flex h-[81.5px] border-b-2 border-[#b1b4b6] pt-[15.3px]"><dt class="w-[362px] pl-px font-bold tracking-[0.5px]">Date added</dt><dd>22 Jan 2020</dd></div>
          <div class="flex h-[81.5px] border-b-2 border-[#b1b4b6] pt-[15.3px]"><dt class="w-[362px] pl-px font-bold">Last accessed</dt><dd class="tracking-[0.55px]">03:45 14 Nov 2024</dd></div>
          <div class="flex h-[81.5px] border-b-2 border-[#b1b4b6] pt-[15.3px]"><dt class="w-[362px] pl-px font-bold tracking-[0.3px]">Last updated</dt><dd class="tracking-[0.33px]">01:22 7 Oct 2024</dd></div>
        </dl>
      </article>
    </section>

    <aside class="ml-[54px] text-[#1d70b8]">
      <h2 class="text-[43px] leading-[50px] font-bold tracking-[0.6px] text-[#0b0c0c]">Dataset actions</h2>
      <ul class="mt-[29.3px] leading-[72.4px] tracking-[-0.2px] whitespace-nowrap underline decoration-[2px] underline-offset-[6px] [text-decoration-skip-ink:none]">
        <li>Check brownfield land dataset</li>
        <li>Brownfield land guidance</li>
        <li class="tracking-[-0.4px]">Manage endpoints</li>
      </ul>
    </aside>
  </div>
</main>
</body>
</html>
